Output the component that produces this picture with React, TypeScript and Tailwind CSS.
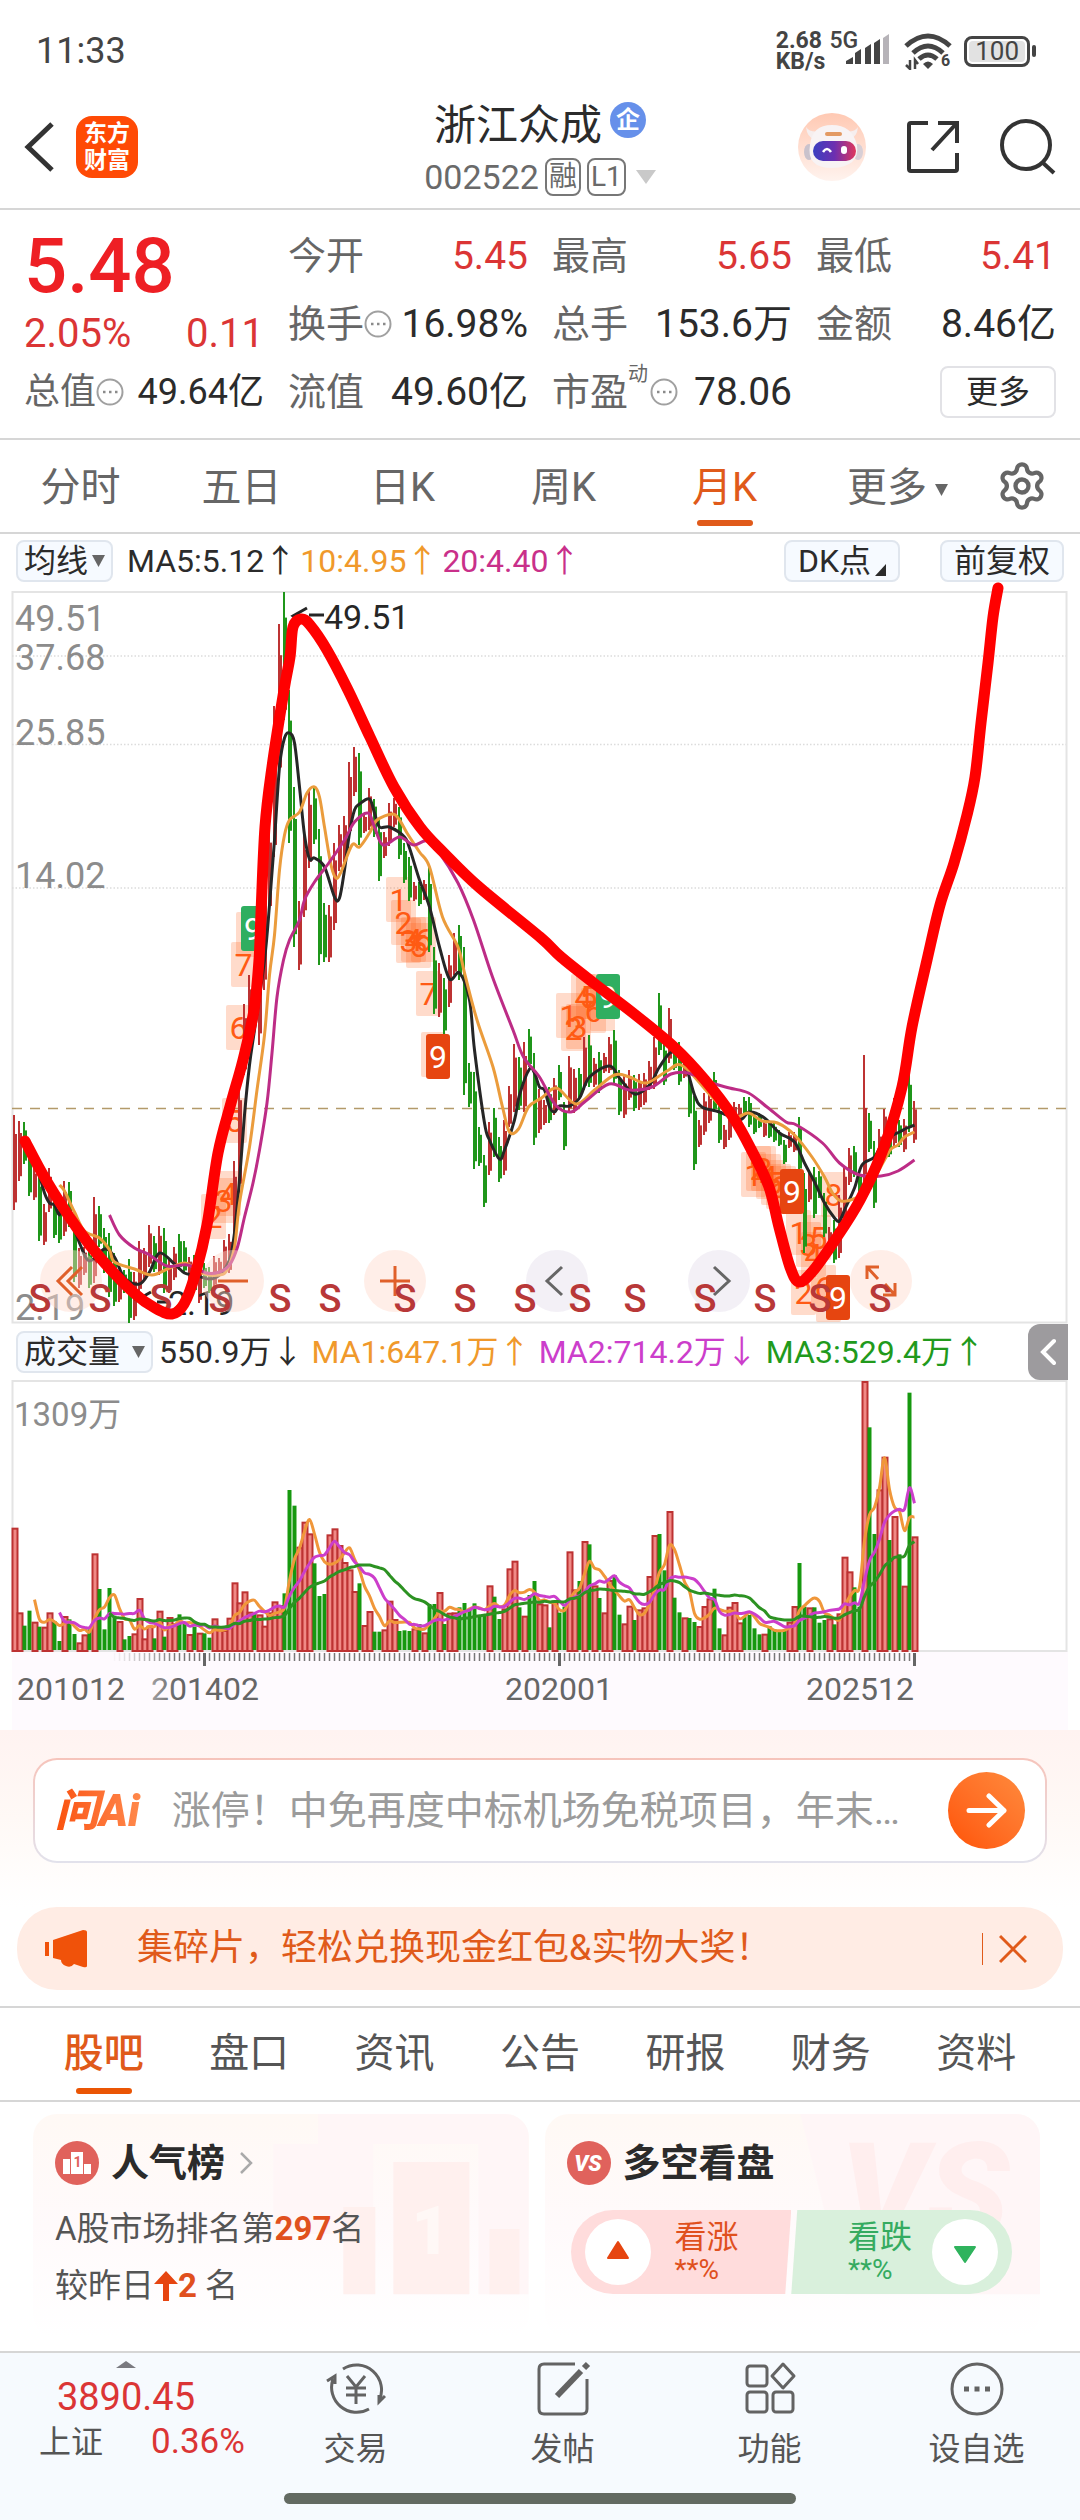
import { useState } from "react";
import type { ReactNode } from "react";
import { Settings } from "lucide-react";

type Pair = [number, number];

const UP = "#bd3232";
const DOWN = "#1f961a";

// [high, low] of every month, in chart units
const candles: Pair[] = [
  [1115, 1210], [1121, 1181], [1122, 1164], [1150, 1196], [1167, 1200], [1173, 1241], [1204, 1245], [1168, 1212], [1200, 1238], [1200, 1243],
  [1181, 1236], [1182, 1227], [1220, 1282], [1248, 1288], [1247, 1275], [1247, 1288], [1197, 1283], [1206, 1247], [1228, 1273], [1233, 1297],
  [1253, 1306], [1270, 1302], [1270, 1293], [1259, 1323], [1272, 1320], [1241, 1293], [1248, 1280], [1225, 1267], [1236, 1272], [1226, 1275],
  [1228, 1293], [1260, 1293], [1247, 1280], [1234, 1270], [1241, 1273], [1257, 1280], [1255, 1293], [1263, 1303], [1263, 1288], [1267, 1293],
  [1256, 1287], [1258, 1277], [1240, 1273], [1234, 1273], [1161, 1240], [1077, 1193], [1004, 1075], [975, 1047], [969, 1027], [900, 1045],
  [860, 990], [825, 913], [706, 857], [624, 780], [592, 720], [690, 843], [787, 947], [901, 970], [833, 917], [789, 868],
  [787, 844], [829, 965], [903, 962], [905, 962], [843, 930], [825, 871], [816, 862], [762, 837], [747, 796], [753, 845],
  [813, 833], [788, 830], [799, 837], [820, 881], [832, 858], [803, 846], [798, 827], [807, 859], [843, 883], [857, 901],
  [882, 901], [882, 906], [880, 900], [867, 952], [947, 1014], [963, 1017], [978, 1035], [955, 1007], [933, 975], [925, 980],
  [947, 1095], [1063, 1107], [1072, 1169], [1127, 1166], [1155, 1207], [1122, 1175], [1108, 1157], [1137, 1182], [1120, 1175], [1086, 1127],
  [1044, 1112], [1057, 1110], [1042, 1112], [1029, 1067], [1053, 1145], [1089, 1133], [1100, 1125], [1087, 1123], [1078, 1115], [1065, 1100],
  [1102, 1150], [1056, 1113], [1069, 1113], [1068, 1098], [1037, 1090], [1035, 1087], [1058, 1087], [1052, 1093], [1053, 1073], [1037, 1073],
  [1030, 1083], [1070, 1115], [1075, 1118], [1070, 1100], [1075, 1111], [1074, 1110], [1073, 1105], [1061, 1090], [1037, 1089], [993, 1055],
  [1042, 1085], [1008, 1063], [1043, 1070], [1042, 1085], [1060, 1078], [1072, 1117], [1096, 1170], [1120, 1147], [1093, 1135], [1093, 1123],
  [1072, 1112], [1103, 1143], [1125, 1149], [1110, 1140], [1102, 1127], [1104, 1123], [1097, 1117], [1097, 1127], [1112, 1134], [1113, 1128],
  [1120, 1137], [1122, 1138], [1123, 1142], [1130, 1146], [1140, 1164], [1132, 1148], [1132, 1152], [1117, 1173], [1173, 1253], [1170, 1202],
  [1167, 1218], [1171, 1198], [1193, 1237], [1227, 1253], [1220, 1263], [1195, 1258], [1166, 1220], [1148, 1185], [1146, 1177], [1173, 1193],
  [1055, 1185], [1113, 1152], [1141, 1208], [1129, 1167], [1109, 1147], [1123, 1157], [1098, 1147], [1120, 1147], [1119, 1152], [1073, 1132],
  [1101, 1143],
];

// monthly volume, negative when the month closed down
const volumes = [
  367, 113, -73, -118, 85, -70, 70, 113, -87, -27, 102, -92, -48, 23, 47, -62, 290, -183, -62, -186,
  -103, 87, -32, -42, 50, 156, 35, 73, -35, 118, -40, 99, 80, -107, -80, 48, -70, 52, -50, -37,
  95, 60, 60, 97, 203, 143, 176, 115, -110, 107, 73, 113, 146, 135, -170, -480, -433, 310, 385, 350,
  -260, -162, -168, 347, 365, 315, 264, 242, 177, -200, 75, 117, -55, -55, 62, 148, 93, -57, -59, -57,
  65, -78, 53, -138, -138, 174, -78, 112, 113, -128, -141, -122, -140, -100, -102, 194, -160, -93, 125, 245,
  268, -128, 103, -165, -207, 140, 137, -68, 148, -112, -130, 296, 182, -207, 327, -317, 194, -156, 113, 210,
  -225, -106, 80, 133, -90, 122, 128, 222, 345, -348, -239, 417, -157, -113, 98, -96, -84, 72, 132, 155,
  -184, -65, 47, 130, 144, 83, -100, -105, -65, -47, 49, -72, -62, -57, -57, 85, 132, -261, -130, 128,
  -128, -82, -90, 95, -77, 110, 280, 236, -188, -130, 807, -668, -348, 482, 580, -330, 402, -287, 193, -772,
  341,
];

// averages as [month, y]
const ma5: Pair[] = [
  [5, 1175], [6, 1193], [7, 1203], [8, 1205], [9, 1215], [10, 1203], [13, 1243], [15, 1261], [18, 1249], [20, 1257], [22, 1278], [25, 1284],
  [27, 1272], [29, 1253], [32, 1264], [34, 1273], [36, 1275], [39, 1279], [41, 1275], [43, 1260], [44, 1233], [45, 1180], [46, 1115],
  [47, 1065], [48, 1030], [50, 960], [51, 905], [52, 840], [53, 767], [54, 738], [55, 733], [56, 743], [57, 787], [58, 835], [59, 859],
  [60, 858], [62, 867], [64, 897], [65, 898], [66, 870], [67, 833], [68, 810], [69, 804], [71, 799], [72, 813], [73, 827], [75, 827],
  [78, 837], [79, 848], [81, 880], [83, 907], [85, 947], [87, 979], [89, 973], [91, 1000], [92, 1050], [94, 1123], [95, 1140], [97, 1159],
  [98, 1150], [100, 1120], [101, 1095], [103, 1069], [104, 1073], [105, 1087], [106, 1090], [107, 1107], [108, 1112], [109, 1106],
  [111, 1106], [113, 1098], [115, 1077], [119, 1066], [121, 1078], [124, 1094], [127, 1085], [129, 1067], [131.5, 1052], [134, 1063],
  [136, 1095], [137.5, 1107], [141, 1112], [145, 1120], [147, 1112], [150, 1118], [153, 1133], [156, 1142], [158, 1163], [160, 1182],
  [162, 1203], [164, 1218], [165, 1221], [166, 1210], [168, 1188], [169.5, 1165], [172, 1157], [174, 1140], [177, 1132], [178.5, 1128],
  [180, 1125],
];

const ma10: Pair[] = [
  [9, 1185], [10, 1191], [12, 1212], [14, 1231], [17, 1238], [19, 1250], [20, 1262], [24, 1269], [27.5, 1275], [31, 1268], [34, 1263],
  [36, 1268], [38, 1274], [41, 1275], [42.5, 1270], [44, 1247], [45, 1203], [47, 1147], [48.5, 1090], [50, 1035], [51, 975], [52, 935],
  [53, 870], [54, 835], [55, 820], [57, 812], [58.5, 793], [60, 787], [61, 797], [62, 827], [63.3, 865], [64.3, 878], [65.3, 872],
  [67.5, 845], [69, 847], [71, 833], [72.5, 820], [75.6, 814], [77, 820], [78.5, 833], [81, 852], [83, 867], [85.6, 917], [88.7, 947],
  [90, 973], [92.5, 1020], [95.7, 1067], [97.6, 1107], [99, 1132], [100.8, 1129], [102.8, 1107], [105.4, 1098], [108.4, 1088],
  [112.3, 1104], [116, 1090], [120, 1075], [123, 1077], [126.4, 1083], [130.5, 1071], [133.7, 1066], [139.5, 1097], [143.7, 1117],
  [146.8, 1113], [149.5, 1121], [152.6, 1123], [156, 1135], [159.5, 1157], [162, 1177], [163.6, 1193], [165.3, 1201], [167.8, 1199],
  [170.5, 1190], [174, 1160], [175.3, 1149], [176.7, 1145], [178, 1137], [180, 1132],
];

const ma20: Pair[] = [
  [19, 1215], [21, 1235], [24, 1248], [26.7, 1254], [30.5, 1266], [34.6, 1265], [38.4, 1273], [41, 1272], [43, 1265], [44.6, 1247],
  [46, 1217], [47.7, 1183], [49, 1150], [50.5, 1103], [51.5, 1053], [52.5, 997], [53.8, 960], [55, 940], [57, 920], [58, 900], [60, 882],
  [63, 862], [66, 840], [68, 822], [70.7, 813], [72, 827], [73.7, 845], [77, 837], [79.8, 845], [82.5, 841], [85, 853], [88.7, 883],
  [91.8, 920], [95.6, 977], [99.7, 1030], [101.8, 1057], [105, 1077], [108.2, 1105], [111.3, 1112], [114, 1102], [118.9, 1084],
  [123, 1090], [127.5, 1087], [131.3, 1074], [134.7, 1073], [139.5, 1083], [143, 1088], [146.8, 1093], [150.5, 1107], [154.3, 1122],
  [156.4, 1125], [161.6, 1143], [165, 1163], [169, 1175], [173.3, 1176], [176.7, 1171], [180, 1160],
];

const scribble: Pair[] = [
  [25, 1141], [46, 1180], [77, 1228], [103, 1261], [134, 1293], [155, 1308], [172, 1314], [184, 1304], [195, 1275], [207, 1225], [218, 1153],
  [231, 1103], [243, 1060], [254, 1010], [259, 960], [261, 913], [265, 827], [272, 767], [284, 690], [290, 657], [293, 627], [301, 619],
  [310, 625], [327, 650], [348, 690], [370, 737], [394, 787], [420, 827], [444, 853], [479, 887], [540, 937], [561, 957], [595, 984],
  [633, 1013], [674, 1047], [705, 1080], [733, 1117], [753, 1153], [769, 1187], [779, 1227], [790, 1267], [799, 1282], [812, 1272],
  [833, 1243], [860, 1200], [884, 1147], [902, 1087], [912, 1027], [927, 960], [940, 905], [954, 863], [967, 815], [975, 777],
  [981, 723], [988, 663], [993, 617], [998, 588],
];

// TD sequence counts: [x, y, digit]
const counts: [number, number, string][] = [
  [236, 912, ""], [231, 942, "7"], [226, 1005, "6"], [222, 1098, "5"], [216, 1171, "4"], [211, 1178, "3"], [201, 1194, "2"],
  [386, 877, "1"], [391, 900, "2"], [396, 918, "3"], [401, 917, "4"], [406, 923, "5"], [411, 917, "6"], [416, 971, "7"], [421, 1032, ""],
  [556, 993, "1"], [561, 1006, "2"], [566, 1004, "3"], [571, 974, "4"], [576, 974, "5"], [581, 988, "6"], [590, 986, ""],
  [741, 1152, "1"], [746, 1146, "2"], [751, 1146, "3"], [756, 1154, "4"], [761, 1160, "5"], [766, 1164, "6"], [771, 1166, ""],
  [786, 1210, "1"], [791, 1270, "2"], [796, 1222, "3"], [801, 1232, "4"], [806, 1215, "5"], [811, 1265, "6"], [816, 1277, ""],
  [821, 1172, "8"],
];

const nines: [number, number, string][] = [
  [241, 906, "#2fae60"], [426, 1034, "#e64510"], [596, 974, "#2fae60"], [780, 1169, "#e64510"], [826, 1275, "#e64510"],
];

const sMarks = [40, 100, 161, 220, 280, 330, 405, 465, 525, 580, 635, 705, 765, 820, 880];

const monthX = (i: number) => 14.5 + i * 5;

function smooth(pts: Pair[]) {
  let d = `M${pts[0][0]} ${pts[0][1]}`;
  for (let i = 0; i < pts.length - 1; i++) {
    const a = pts[i - 1] ?? pts[i];
    const b = pts[i];
    const c = pts[i + 1];
    const e = pts[i + 2] ?? c;
    d += `C${b[0] + (c[0] - a[0]) / 6} ${b[1] + (c[1] - a[1]) / 6} ${c[0] - (e[0] - b[0]) / 6} ${c[1] - (e[1] - b[1]) / 6} ${c[0]} ${c[1]}`;
  }
  return d;
}

const byMonth = (pts: Pair[]): Pair[] => pts.map(([i, y]) => [monthX(i), y]);

function volumeAverage(n: number): Pair[] {
  const out: Pair[] = [];
  for (let i = n - 1; i < volumes.length; i++) {
    const sum = volumes.slice(i - n + 1, i + 1).reduce((s, v) => s + Math.abs(v), 0);
    out.push([monthX(i), 270 - sum / n / 3]);
  }
  return out;
}

function StatusBar() {
  return (
    <div className="flex items-center justify-between pl-9 pr-11 pt-6 pb-4 text-[#444]">
      <span className="text-4xl leading-[54px]">11:33</span>
      <div className="flex items-center gap-3">
        <div className="flex items-start">
          <div className="text-[23px] font-bold leading-[21px]">
            <div>2.68</div>
            <div>KB/s</div>
          </div>
          <span className="ml-1 text-[23px] font-medium leading-[21px]">5G</span>
          <svg width="46" height="42" viewBox="0 0 46 42" className="-ml-3">
            <path d="M0 34v-3l7-4v7zM9 34V23l6-4v15zM19 34V18l6-4v20zM28 34V13l6-4v25z" fill="#444" />
            <path d="M37 34V8l6-4v30z" fill="#b6b3b8" />
          </svg>
        </div>
        <svg width="48" height="38" viewBox="0 0 48 38" fill="none" stroke="#444" strokeWidth="5">
          <path d="M2 14Q24-6 46 14M9 21q15-14 30 0M15 27q9-8 18 0" />
          <path d="M19 32q5-5 10 0l-5 5z" fill="#444" stroke="none" />
          <path d="M6 28v9l-4-4M11 37v-9l3 4" strokeWidth="2.500" />
          <text x="37" y="34" fontSize="16" fontWeight="700" fill="#444" stroke="none">6</text>
        </svg>
        <div className="flex items-center gap-0.5">
          <span className="rounded-lg border-[3px] border-[#444] p-0.5">
            <span className="block rounded bg-[#e2e2e2] px-1.5 text-[26px] leading-[21px]">100</span>
          </span>
          <span className="h-3 w-1 rounded bg-[#444]" />
        </div>
      </div>
    </div>
  );
}

function Header() {
  return (
    <header className="flex items-center justify-between border-b-2 border-[#d6d6d6] px-6 pb-2">
      <div className="flex flex-1 items-center gap-5">
        <button aria-label="返回">
          <svg width="32" height="52" viewBox="0 0 32 52" fill="none" stroke="#333" strokeWidth="5">
            <path d="M28 3L4 26l24 23" />
          </svg>
        </button>
        <div className="rounded-2xl bg-[#ff4a05] px-2 py-1 text-[23px] font-bold leading-[27px] text-white">
          <div>东方</div>
          <div>财富</div>
        </div>
      </div>
      <div className="flex flex-col items-center pt-1">
        <div className="flex items-start gap-2">
          <h1 className="text-[42px] leading-[56px] text-[#2b2b2b]">浙江众成</h1>
          <span className="mt-1 rounded-full bg-[#6690ea] px-[6px] text-2xl font-bold leading-9 text-white">企</span>
        </div>
        <div className="flex items-center gap-1.5 text-[#6a6a6a]">
          <span className="text-[34px] leading-[46px]">002522</span>
          <span className="rounded-lg border-2 border-[#777] px-0.5 text-[28px] leading-[34px]">融</span>
          <span className="rounded-lg border-2 border-[#777] px-0.5 text-[28px] leading-[34px]">L1</span>
          <svg width="20" height="14" viewBox="0 0 20 14" fill="#c9c9c9" className="ml-1">
            <path d="M0 0h20L10 14z" />
          </svg>
        </div>
      </div>
      <div className="flex flex-1 items-center justify-end gap-10">
        <button aria-label="智能助手">
          <svg width="68" height="68" viewBox="0 0 68 68">
            <defs>
              <linearGradient id="halo" x1="0" y1="0" x2="0" y2="1">
                <stop offset="0" stopColor="#ffc9b3" />
                <stop offset="1" stopColor="#fff3ee" />
              </linearGradient>
              <linearGradient id="visor">
                <stop offset="0" stopColor="#3a3fc0" />
                <stop offset="0.500" stopColor="#6d2fb0" />
                <stop offset="1" stopColor="#e0375c" />
              </linearGradient>
            </defs>
            <circle cx="34" cy="34" r="34" fill="url(#halo)" />
            <path d="M8 14q1 10 8 12l6-8q-10 2-14-4zM60 14q-1 10-8 12l-6-8q10 2 14-4z" fill="#f6eeee" />
            <ellipse cx="11" cy="39" rx="5" ry="8" fill="#c9c2cc" />
            <ellipse cx="60" cy="39" rx="5" ry="8" fill="#d8cfd6" />
            <path d="M12 32Q14 12 34 12t25 20q3 22-25 23-26 0-22-23z" fill="#f8f3f4" />
            <rect x="15" y="28" width="43" height="20" rx="10" fill="url(#visor)" />
            <rect x="27" y="19" width="17" height="4" rx="2" fill="#e39a63" />
            <path d="M25 39q4-6 8 0" stroke="#fff" strokeWidth="2.500" fill="none" />
            <rect x="43" y="33" width="6" height="8" rx="3" fill="#fff" />
          </svg>
        </button>
        <button aria-label="分享">
          <svg width="54" height="54" viewBox="0 0 54 54" fill="none" stroke="#333" strokeWidth="4">
            <path d="M22 3H5q-2 0-2 2v44q0 2 2 2h44q2 0 2-2V33M32 3h19v20M50 4L26 30" />
          </svg>
        </button>
        <button aria-label="搜索">
          <svg width="56" height="56" viewBox="0 0 56 56" fill="none" stroke="#333" strokeWidth="4">
            <circle cx="26" cy="26" r="24" />
            <path d="M42 43l12 11" />
          </svg>
        </button>
      </div>
    </header>
  );
}

function Info() {
  return (
    <svg width="28" height="28" viewBox="0 0 28 28" className="shrink-0">
      <circle cx="14" cy="14" r="12.500" fill="none" stroke="#a0a0a0" strokeWidth="2" />
      <path d="M7 14h2.500M13 14h2.500M19 14h2.500" stroke="#8a8a8a" strokeWidth="2.500" />
    </svg>
  );
}

function Quote({ label, value, up, children }: { label: string; value: string; up?: boolean; children?: ReactNode }) {
  return (
    <div className="flex items-center justify-between whitespace-nowrap leading-[68px]">
      <span className="flex items-center text-[38px] text-[#666]">
        {label}
        {children}
      </span>
      <span className={`text-[39px] ${up ? "text-[#db3535]" : "text-[#2b2b2b]"}`}>{value}</span>
    </div>
  );
}

function QuotePanel() {
  return (
    <section className="grid grid-cols-4 gap-x-6 border-b-2 border-[#d6d6d6] px-6 py-3">
      <div>
        <div className="text-[76px] font-medium leading-[88px] text-[#ee1f24]">5.48</div>
        <div className="flex justify-between text-[40px] leading-[48px] text-[#db3535]">
          <span>2.05%</span>
          <span>0.11</span>
        </div>
        <div className="flex items-center justify-between whitespace-nowrap text-[36px] leading-[68px]">
          <span className="flex items-center text-[#666]">
            总值
            <Info />
          </span>
          <span className="text-[#2b2b2b]">49.64亿</span>
        </div>
      </div>
      <div>
        <Quote label="今开" value="5.45" up />
        <Quote label="换手" value="16.98%">
          <Info />
        </Quote>
        <Quote label="流值" value="49.60亿" />
      </div>
      <div>
        <Quote label="最高" value="5.65" up />
        <Quote label="总手" value="153.6万" />
        <Quote label="市盈" value="78.06">
          <span className="mr-0.5 self-start text-[20px] leading-8">动</span>
          <Info />
        </Quote>
      </div>
      <div>
        <Quote label="最低" value="5.41" up />
        <Quote label="金额" value="8.46亿" />
        <div className="flex justify-end pt-2">
          <button className="rounded-lg border-2 border-[#e2e2e6] px-6 text-[32px] leading-[48px] text-[#2b2b2b]">更多</button>
        </div>
      </div>
    </section>
  );
}

const periods = ["分时", "五日", "日K", "周K", "月K"];

function Caret({ className }: { className?: string }) {
  return (
    <svg width="13" height="12" viewBox="0 0 13 12" fill="#666" className={className}>
      <path d="M0 0h13L6.500 12z" />
    </svg>
  );
}

function PeriodTabs() {
  const [active, setActive] = useState("月K");
  return (
    <nav className="grid grid-cols-[repeat(5,161fr)_185fr_90fr] border-b-2 border-[#d6d6d6] text-[40px] text-[#666]">
      {periods.map((p) => (
        <button
          key={p}
          onClick={() => setActive(p)}
          className={`flex flex-col items-center pt-5 pb-1.5 ${p === active ? "text-[#e05a1a]" : ""}`}
        >
          <span className="leading-[56px]">{p}</span>
          <span className={`mt-1 h-1.5 w-14 rounded-full ${p === active ? "bg-[#e05a1a]" : ""}`} />
        </button>
      ))}
      <button className="flex items-start justify-center gap-2 pt-5 leading-[56px]">
        更多
        <Caret className="mt-6" />
      </button>
      <button aria-label="设置" className="flex items-start justify-end pt-5 pr-8">
        <Settings size={52} strokeWidth={2} />
      </button>
    </nav>
  );
}

const pill = "rounded-lg border-2 border-[#e0e6ee] bg-[#f6faff] text-[32px] leading-[38px] text-[#2b2b2b] whitespace-nowrap";

function PriceChart() {
  return (
    <section>
      <div className="flex items-center whitespace-nowrap pt-1.5 pr-4 pb-2 pl-4">
        <button className={`${pill} flex items-center gap-1 px-1.5`}>
          均线
          <Caret />
        </button>
        <div className="ml-3.5 flex flex-1 gap-1 text-[32px] leading-[42px]">
          <span className="text-[#2b2b2b]">MA5:5.12↑</span>
          <span className="text-[#f0992b]">10:4.95↑</span>
          <span className="text-[#c9308a]">20:4.40↑</span>
        </div>
        <button className={`${pill} flex items-end gap-1 px-3`}>
          DK点
          <svg width="11" height="12" viewBox="0 0 11 12" className="mb-1">
            <path d="M11 0v12H0z" fill="#2b2b2b" />
          </svg>
        </button>
        <button className={`${pill} ml-10 px-3`}>前复权</button>
      </div>
      <div className="relative">
        <svg viewBox="0 590 1080 734" className="block w-full overflow-visible">
          <rect x="12.500" y="592" width="1054" height="730.500" fill="#fff" stroke="#e4e4e4" strokeWidth="2" />
          {[656, 744.5, 888].map((y) => (
            <path key={y} d={`M12 ${y}H1066`} stroke="#dcdcdc" strokeWidth="1.500" strokeDasharray="1.500 2" />
          ))}
          <path d="M12 1108.500H1066" stroke="#b39a6a" strokeWidth="1.500" strokeDasharray="10 8" />
          <g fill="#8c8c8c" fontSize="36">
            <text x="15" y="631">49.51</text>
            <text x="15" y="670">37.68</text>
            <text x="15" y="745">25.85</text>
            <text x="15" y="888">14.02</text>
            <text x="15" y="1320">2.19</text>
          </g>
          <g fill="#ff5a14">
            {counts.map(([x, y, n]) => (
              <g key={x}>
                <rect x={x} y={y} width="25" height="45" rx="2" fillOpacity="0.22" />
                {n && <text x={x + 12.5} y={y + 34} fontSize="32" textAnchor="middle">{n}</text>}
              </g>
            ))}
          </g>
          {candles.map(([hi, lo], i) => {
            const color = volumes[i] > 0 ? UP : DOWN;
            const x = monthX(i);
            const top = i === 170 ? 1108 : hi + (lo - hi) * 0.2;
            return (
              <g key={i} fill={color}>
                <rect x={x - 1.5} y={hi} width="2" height={lo - hi} />
                <rect x={x - 1.5} y={top} width="4" height={lo - (lo - hi) * 0.08 - top} />
              </g>
            );
          })}
          <g fill="none" strokeWidth="3">
            <path d={smooth(byMonth(ma5))} stroke="#262626" />
            <path d={smooth(byMonth(ma10))} stroke="#eb9c3c" />
            <path d={smooth(byMonth(ma20))} stroke="#bd2c86" />
          </g>
          {nines.map(([x, y, color]) => (
            <g key={x}>
              <rect x={x} y={y} width="24" height="45" rx="3" fill={color} />
              <text x={x + 12} y={y + 34} fontSize="32" fill="#fff" textAnchor="middle">9</text>
            </g>
          ))}
          <g fill="#262626" fontSize="34">
            <path d="M307 608l-14 8 5 4M309 615h15" fill="none" stroke="#262626" strokeWidth="3" />
            <text x="324" y="629">49.51</text>
            <path d="M151 1292l-14 8 14 8M157 1302h12" fill="none" stroke="#262626" strokeWidth="3" />
            <text x="168" y="1315">2.19</text>
          </g>
        </svg>
        <div className="absolute bottom-3 left-10 flex gap-[100px] text-[#e0602a]">
          <ChartButton label="最左" tint="bg-[#ffd9cc]/45">
            <path d="M32 17L18 31l14 14M42 17L28 31l14 14" />
          </ChartButton>
          <ChartButton label="缩小" tint="bg-[#ffd9cc]/45">
            <path d="M16 31h30" />
          </ChartButton>
          <ChartButton label="放大" tint="bg-[#ffd9cc]/45">
            <path d="M16 31h30M31 16v30" />
          </ChartButton>
          <ChartButton label="左移" tint="bg-[#ebe6f0]/60" gray>
            <path d="M36 17L21 31l15 14" />
          </ChartButton>
          <ChartButton label="右移" tint="bg-[#ebe6f0]/60" gray>
            <path d="M26 17l15 14-15 14" />
          </ChartButton>
          <ChartButton label="全屏" tint="bg-[#ffd9cc]/45">
            <path d="M17 29V17h12M17 17l11 12M45 33v12H33M45 45L35 34" />
          </ChartButton>
        </div>
        <svg viewBox="0 590 1080 734" className="pointer-events-none absolute inset-0 block w-full overflow-visible">
          <g fill="#b83838" fontSize="38" fontWeight="500" textAnchor="middle">
            {sMarks.map((x) => (
              <text key={x} x={x} y="1312">S</text>
            ))}
          </g>
          <path d={smooth(scribble)} fill="none" stroke="#ff0000" strokeWidth="11" strokeLinecap="round" strokeLinejoin="round" />
        </svg>
      </div>
    </section>
  );
}

function ChartButton({ label, tint, gray, children }: { label: string; tint: string; gray?: boolean; children: ReactNode }) {
  return (
    <button aria-label={label} className={`rounded-full ${tint} ${gray ? "text-[#666]" : ""}`}>
      <svg width="62" height="62" viewBox="0 0 62 62" fill="none" stroke="currentColor" strokeWidth="3">
        {children}
      </svg>
    </button>
  );
}

function VolumeChart() {
  return (
    <section>
      <div className="flex items-center whitespace-nowrap pr-3 pl-4">
        <button className={`${pill} flex items-center gap-3 px-1.5`}>
          成交量
          <Caret />
        </button>
        <div className="ml-1.5 flex flex-1 gap-2 text-[32px] leading-[42px]">
          <span className="text-[#2b2b2b]">550.9万↓</span>
          <span className="text-[#f0992b]">MA1:647.1万↑</span>
          <span className="text-[#cc3ecb]">MA2:714.2万↓</span>
          <span className="text-[#219a1c]">MA3:529.4万↑</span>
        </div>
        <button aria-label="展开" className="rounded-l-xl bg-[#9d9b9e] px-3 py-3">
          <svg width="16" height="32" viewBox="0 0 16 32" fill="none" stroke="#fff" strokeWidth="4" strokeLinecap="round">
            <path d="M14 5L3 16l11 11" />
          </svg>
        </button>
      </div>
      <svg viewBox="0 0 1080 350" className="block w-full">
        <defs>
          <linearGradient id="fade">
            <stop offset="0.600" stopColor="#fefafe" />
            <stop offset="1" stopColor="#fefafe" stopOpacity="0" />
          </linearGradient>
        </defs>
        <rect x="12" y="271" width="1056" height="79" fill="#fefafe" />
        <rect x="12.500" y="1" width="1054" height="270" fill="#fff" stroke="#e4e4e4" strokeWidth="2" />
        <text x="14" y="46" fontSize="33" fill="#8c8c8c">1309万</text>
        {volumes.map((v, i) => {
          const h = Math.abs(v) / 3;
          return v > 0 ? (
            <rect key={i} x={monthX(i) - 2} y={271 - h} width="5" height={h} fill="#f08a86" stroke="#bd3232" strokeWidth="2" />
          ) : (
            <rect key={i} x={monthX(i) - 2} y={270 - h} width="4" height={h} fill="#16980f" />
          );
        })}
        <g fill="none" strokeWidth="3">
          <path d={smooth(volumeAverage(5))} stroke="#f0973a" />
          <path d={smooth(volumeAverage(10))} stroke="#cc3ecb" />
          <path d={smooth(volumeAverage(20))} stroke="#2c9222" />
        </g>
        {volumes.map((_, i) => (
          <path key={i} d={`M${monthX(i)} 273v8`} stroke="#777" strokeWidth="1.500" />
        ))}
        <path d="M204.500 273v13M559.500 273v13M914.500 273v13" stroke="#666" strokeWidth="3" />
        <g fontSize="32" fill="#666">
          <text x="151" y="320">201402</text>
          <rect x="12" y="272" width="165" height="70" fill="url(#fade)" />
          <text x="17" y="320">201012</text>
          <text x="505" y="320">202001</text>
          <text x="914" y="320" textAnchor="end">202512</text>
        </g>
      </svg>
    </section>
  );
}

function AskAi() {
  return (
    <section className="bg-linear-to-b from-[#fff3f1] via-[#fff9f6] to-white px-[33px] pt-7 pb-11">
      <div className="rounded-3xl bg-linear-to-b from-[#f6c4bb] to-[#e2e2ec] p-0.5">
        <div className="flex items-center rounded-[22px] bg-white py-3 pr-5 pl-5">
          <span className="bg-linear-to-r from-[#fa5108] to-[#ff8a4c] bg-clip-text pr-1 text-[44px] font-black italic leading-[60px] text-transparent">
            问Ai
          </span>
          <input
            aria-label="问AI"
            placeholder="涨停！中免再度中标机场免税项目，年末…"
            className="ml-7 min-w-0 flex-1 text-[39px] leading-[60px] outline-none placeholder:text-[#9b9b9b]"
          />
          <button aria-label="发送" className="rounded-full bg-linear-to-tr from-[#ff5200] to-[#ff8a3c] p-[18px]">
            <svg width="41" height="41" viewBox="0 0 41 41" fill="none" stroke="#fff" strokeWidth="5" strokeLinecap="round" strokeLinejoin="round">
              <path d="M3 20.500h35M23 6l15 14.500L23 35" />
            </svg>
          </button>
        </div>
      </div>
    </section>
  );
}

function Banner() {
  return (
    <section className="px-[17px] pb-4">
      <div className="flex items-center rounded-[40px] bg-[#ffece4] py-3.5 pl-7 pr-9 text-[#e05a1a]">
        <svg width="42" height="38" viewBox="0 0 42 38" fill="#f0520a">
          <path d="M0 12h4v14H0zM8 10L38 0q4 0 4 2v34q0 2-4 1l-9-3q-3 4-8 2t-5-6l-8-2z" />
        </svg>
        <p className="ml-[50px] flex-1 text-[36px] leading-[55px]">集碎片，轻松兑换现金红包&amp;实物大奖！</p>
        <span className="h-8 w-px bg-[#e05a1a]" />
        <button aria-label="关闭" className="ml-4">
          <svg width="28" height="30" viewBox="0 0 28 30" stroke="currentColor" strokeWidth="3">
            <path d="M1 2l26 26M27 2L1 28" />
          </svg>
        </button>
      </div>
    </section>
  );
}

const sections = ["股吧", "盘口", "资讯", "公告", "研报", "财务", "资料"];

function SectionTabs() {
  const [active, setActive] = useState("股吧");
  return (
    <nav className="grid grid-cols-7 border-y-2 border-[#d6d6d6] px-[31px] text-[40px] text-[#555]">
      {sections.map((s) => (
        <button
          key={s}
          onClick={() => setActive(s)}
          className={`flex flex-col items-center pt-[18px] pb-1.5 ${s === active ? "font-medium text-[#e05a1a]" : ""}`}
        >
          <span className="leading-[56px]">{s}</span>
          <span className={`mt-1.5 h-1.5 w-14 rounded-full ${s === active ? "bg-[#ea5504]" : ""}`} />
        </button>
      ))}
    </nav>
  );
}

function Cards() {
  return (
    <section className="grid grid-cols-2 gap-4 pt-3 pr-10 pl-[33px] text-[#555]">
      <div className="relative overflow-hidden rounded-3xl bg-linear-to-b from-[#fff9f5] via-[#fffafb] to-white px-[22px] pt-5 pb-6">
        <svg viewBox="0 0 495 220" className="absolute inset-0 w-full">
          <path d="M285 0h210v180h-50V30H340v90H240V30h45z" fill="#fff6f7" />
          <path d="M310 93h32v87h-32zM360 48h76v132h-76zM456 115h30v65h-30z" fill="#fff0ee" />
          <text x="378" y="140" fontSize="66" fontWeight="900" fill="#fff8f6">1</text>
        </svg>
        <div className="relative">
          <div className="flex items-center">
            <svg width="44" height="44" viewBox="0 0 44 44">
              <circle cx="22" cy="22" r="22" fill="#e0625c" />
              <path d="M8 18h7v15H8zM16 11h12v22H16zM29 23h7v10h-7z" fill="#fff" />
              <text x="18.500" y="26" fontSize="14" fontWeight="700" fill="#e0625c">1</text>
            </svg>
            <h2 className="ml-3 text-[38px] font-bold leading-[58px] text-[#2b2b2b]">人气榜</h2>
            <svg width="14" height="22" viewBox="0 0 14 22" fill="none" stroke="#aaa" strokeWidth="2.500" className="ml-3.5">
              <path d="M2 1l10 10L2 21" />
            </svg>
          </div>
          <p className="whitespace-nowrap pt-2 text-[33px] leading-[58px]">
            A股市场排名第<b className="font-bold text-[#e0501e]">297</b>名
          </p>
          <p className="flex items-center text-[33px] leading-[56px]">
            较昨日
            <svg width="24" height="30" viewBox="0 0 24 30" fill="#e64510">
              <path d="M12 0l12 13h-9v17H9V13H0z" />
            </svg>
            <b className="font-bold text-[#e0501e]">2</b>&nbsp;名
          </p>
        </div>
      </div>
      <div className="relative overflow-hidden rounded-3xl bg-linear-to-b from-[#fff9f5] via-[#fffafb] to-white px-[22px] pt-5 pb-6">
        <svg viewBox="0 0 495 220" className="absolute inset-0 w-full">
          <path d="M255 0h240v180H300z" fill="#fff6f7" />
          <text x="295" y="125" fontSize="135" fontWeight="900" fontStyle="italic" fill="#ffeeee">VS</text>
        </svg>
        <div className="relative">
          <div className="flex items-center">
            <svg width="44" height="44" viewBox="0 0 44 44">
              <circle cx="22" cy="22" r="22" fill="#e0625c" />
              <text x="21" y="30" fontSize="22" fontWeight="900" fontStyle="italic" textAnchor="middle" fill="#fff">VS</text>
            </svg>
            <h2 className="ml-3 text-[38px] font-bold leading-[58px] text-[#2b2b2b]">多空看盘</h2>
          </div>
          <div className="mt-[18px] mr-1.5 ml-1 flex text-[32px] leading-9">
            <button className="flex flex-1 items-center gap-6 rounded-l-[42px] bg-[#ffdcdc] py-[9px] pl-3.5 text-left text-[#e0501e] [clip-path:polygon(0_0,100%_0,calc(100%-6px)_100%,0_100%)]">
              <svg width="66" height="66" viewBox="0 0 66 66">
                <circle cx="33" cy="33" r="33" fill="#fff" />
                <path d="M33 23l10 16H23z" fill="#e64510" stroke="#e64510" strokeWidth="2" strokeLinejoin="round" />
              </svg>
              <span>
                <span className="block">看涨</span>
                <span className="block text-[28px] leading-[30px]">**%</span>
              </span>
            </button>
            <button className="flex flex-1 items-center justify-end gap-5 rounded-r-[42px] bg-[#d9f0dc] py-[9px] pr-3.5 text-left text-[#35ab60] [clip-path:polygon(6px_0,100%_0,100%_100%,0_100%)]">
              <span>
                <span className="block">看跌</span>
                <span className="block text-[28px] leading-[30px]">**%</span>
              </span>
              <svg width="66" height="66" viewBox="0 0 66 66">
                <circle cx="33" cy="33" r="33" fill="#fff" />
                <path d="M33 43l10-15H23z" fill="#2fb35d" stroke="#2fb35d" strokeWidth="2" strokeLinejoin="round" />
              </svg>
            </button>
          </div>
        </div>
      </div>
    </section>
  );
}

function NavItem({ label, children }: { label: string; children: ReactNode }) {
  return (
    <button className="flex flex-col items-center pt-2">
      <svg width="60" height="56" viewBox="0 0 60 56" fill="none" stroke="#636363" strokeWidth="3">
        {children}
      </svg>
      <span className="mt-2 text-[32px] leading-[48px] text-[#555]">{label}</span>
    </button>
  );
}

function BottomNav() {
  return (
    <footer className="mt-auto border-t-2 border-[#d6d6d6] bg-[#f6fafe]">
      <div className="grid grid-cols-[252fr_207fr_207fr_207fr_207fr]">
        <div className="flex flex-col items-center pt-2">
          <svg width="20" height="7" viewBox="0 0 20 7" fill="#7a7a80">
            <path d="M10 0l10 7H0z" />
          </svg>
          <div className="pt-1 text-[38px] leading-[50px] text-[#db3535]">3890.45</div>
          <div className="flex gap-12 self-start pl-[39px] text-[35px] leading-10">
            <span className="text-[32px] text-[#555]">上证</span>
            <span className="text-[#db3535]">0.36%</span>
          </div>
        </div>
        <NavItem label="交易">
          <path d="M17 8a25 25 0 0 1 36 32M43 48A25 25 0 0 1 7 18M1 20l8-5v8M59 35l-6 6v-7" />
          <path d="M21 15l9 11 9-11M20 27h20M20 34h20M30 26v17" />
        </NavItem>
        <NavItem label="发帖">
          <path d="M42 3H11q-5 0-5 5v40q0 5 5 5h38q5 0 5-5V18" />
          <path d="M48 10L24 35" strokeWidth="6" />
          <path d="M51 7l4-4" strokeWidth="6" />
        </NavItem>
        <NavItem label="功能">
          <rect x="7" y="5" width="20" height="20" rx="3" />
          <rect x="7" y="31" width="20" height="20" rx="3" />
          <rect x="33" y="31" width="20" height="20" rx="3" />
          <path d="M43 3l11 12-11 12-11-12z" strokeLinejoin="round" />
        </NavItem>
        <NavItem label="设自选">
          <circle cx="30" cy="28" r="25" />
          <path d="M17 28h5M27.500 28h5M38 28h5" strokeWidth="5" />
        </NavItem>
      </div>
      <div className="flex justify-center pt-5 pb-4">
        <span className="h-[11px] w-[512px] rounded-full bg-[#636a62]" />
      </div>
    </footer>
  );
}

export default function App() {
  return (
    <div className="flex min-h-screen flex-col bg-white font-['Roboto','Noto_Sans_CJK_SC',sans-serif]">
      <StatusBar />
      <Header />
      <QuotePanel />
      <PeriodTabs />
      <PriceChart />
      <VolumeChart />
      <AskAi />
      <Banner />
      <SectionTabs />
      <Cards />
      <BottomNav />
    </div>
  );
}
